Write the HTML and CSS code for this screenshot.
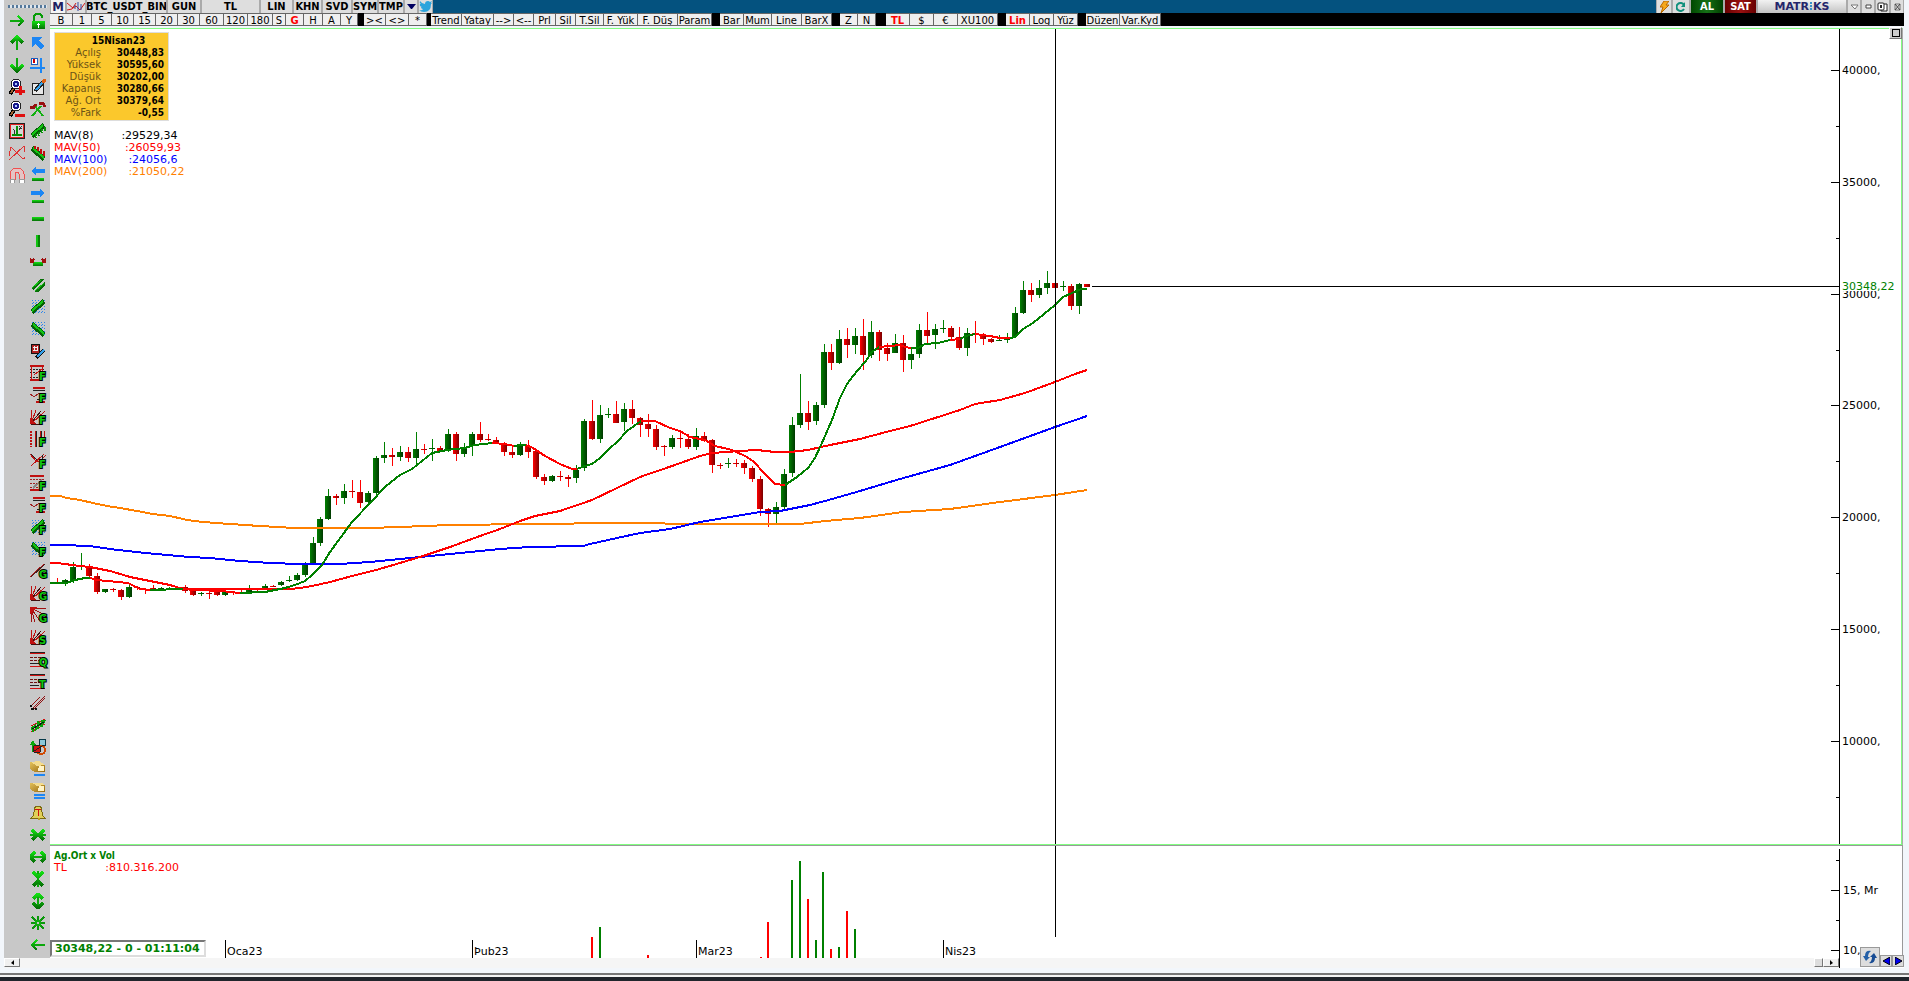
FILE: index.html
```html
<!DOCTYPE html>
<html lang="tr">
<head>
  <meta charset="UTF-8" />
  <meta name="viewport" content="width=device-width, initial-scale=1.0"/>
  <title>BTC_USDT_BIN | Matriks</title>
  <link rel="stylesheet" href="styles.css">
</head>
<body>

  <!-- Icon library -->
  <svg class="icon-defs" aria-hidden="true">
    <defs>
      <linearGradient id="green-v" x1="0" y1="0" x2="0" y2="1">
        <stop offset="0" stop-color="#12e012"/><stop offset="1" stop-color="#067006"/>
      </linearGradient>
      <linearGradient id="gold" x1="0" y1="0" x2="1" y2="1">
        <stop offset="0" stop-color="#e8c860"/><stop offset="1" stop-color="#98680c"/>
      </linearGradient>
      <pattern id="dots" width="3" height="3" patternUnits="userSpaceOnUse">
        <rect width="1" height="1" fill="#2a86ee"/><rect x="2" y="1" width="1" height="1" fill="#2a86ee"/>
      </pattern>
      <linearGradient id="candle-up"><stop offset="0" stop-color="#008000"/><stop offset="1" stop-color="#003800"/></linearGradient>
      <linearGradient id="candle-down"><stop offset="0" stop-color="#ff0000"/><stop offset="1" stop-color="#780000"/></linearGradient>
    </defs>

    <symbol id="i-right" viewBox="0 0 16 16"><path d="M9 3l5 5-5 5" fill="none" stroke="url(#green-v)" stroke-width="2"/><path d="M1 7h12v2H1z" fill="#0ba80b"/></symbol>
    <symbol id="i-left" viewBox="0 0 16 16"><path d="M7 3L2 8l5 5" fill="none" stroke="url(#green-v)" stroke-width="2"/><path d="M2 7h13v2H2z" fill="#0ba80b"/></symbol>
    <symbol id="i-up" viewBox="0 0 16 16"><path d="M7 3h2v12H7z" fill="#0ba80b"/><path d="M2 8l6-6 6 6" fill="none" stroke="url(#green-v)" stroke-width="3"/></symbol>
    <symbol id="i-down" viewBox="0 0 16 16"><path d="M7 1h2v12H7z" fill="#0ba80b"/><path d="M2 8l6 6 6-6" fill="none" stroke="url(#green-v)" stroke-width="3"/></symbol>
    <symbol id="i-magnifier" viewBox="0 0 16 16"><path d="M5 9l-4 6" stroke="#000" stroke-width="4"/><path d="M4 10l-2 4" stroke="#a06030" stroke-width="2"/><circle cx="7" cy="5" r="5" fill="#fff" stroke="#222" stroke-width="1"/><circle cx="7" cy="5" r="2" fill="#aac4ff" stroke="#18188c" stroke-width="2"/></symbol>
    <symbol id="i-zoomin" viewBox="0 0 16 16"><use href="#i-magnifier"/><path d="M6 12h10M11 7v9" stroke="#e01010" stroke-width="3"/></symbol>
    <symbol id="i-zoomout" viewBox="0 0 16 16"><use href="#i-magnifier"/><path d="M6 14h10" stroke="#e01010" stroke-width="3"/></symbol>
    <symbol id="i-scale" viewBox="0 0 16 16"><path d="M0 0h16v16H0z" fill="#222"/><path d="M1 1h14v14H1z" fill="#e02020"/><path d="M2 2h12v12H2z" fill="#d8d8d8"/><path d="M8 3v9M3 12h10" stroke="#069006" stroke-width="2"/><path d="M4 6l2 2-1 3M10 3l3 3M13 3l-3 4" stroke="#333" fill="none"/></symbol>
    <symbol id="i-butterfly" viewBox="0 0 16 16"><path d="M-1 15L2 2l12 12 3-2L15 1 0 15z" fill="none" stroke="#e03030"/></symbol>
    <symbol id="i-magnet" viewBox="0 0 16 16"><path d="M1 12V7a7 6 0 0 1 14 0v5h-5V7a2 2 0 0 0-4 0v5z" fill="#e4c4c4" stroke="#f05050"/><path d="M1 12h4v4H1zM10 12h5v4h-5z" fill="#fff" stroke="#999" stroke-width="1"/></symbol>

    <symbol id="i-lock" viewBox="0 0 16 16"><path d="M4 8V4q0-3 4-3t4 3v1" fill="none" stroke="#079c07" stroke-width="2"/><rect x="2" y="8" width="13" height="8" rx="1" fill="url(#green-v)"/><path d="M8 10v5M7 11h3" stroke="#fff"/></symbol>
    <symbol id="i-cursor" viewBox="0 0 16 16"><path d="M2 2h10L9 5l5 6-3 3-6-5-3 3z" fill="#1c86f4"/></symbol>
    <symbol id="i-crossbox" viewBox="0 0 16 16"><path d="M11 1v15M0 11h15" stroke="#1c86f4" stroke-width="2"/><rect x="1" y="1" width="6" height="6" fill="#fff" stroke="#1c60c0"/><path d="M4 2v4" stroke="#c00" stroke-width="2"/></symbol>
    <symbol id="i-note" viewBox="0 0 16 16"><path d="M2 4h11v11H2z" fill="#e8e8e8" stroke="#222"/><path d="M5 12L14 2" stroke="#222" stroke-width="4"/><path d="M6 11l7-8" stroke="#35a0ea" stroke-width="2"/><circle cx="14" cy="2" r="2" fill="#e06010"/></symbol>
    <symbol id="i-tools" viewBox="0 0 16 16"><path d="M2 15L11 5M13 15L5 5" stroke="#10b010" stroke-width="2"/><path d="M0 6h4l2-3M9 2h4l2 4" fill="none" stroke="#981010" stroke-width="3"/></symbol>
    <symbol id="i-bar-up" viewBox="0 0 16 16"><path d="M2 13L14 2" stroke="#066006" stroke-width="5"/><path d="M2 12L13 2" stroke="#12c412" stroke-width="2"/></symbol>
    <symbol id="i-bar-down" viewBox="0 0 16 16"><path d="M2 3l12 11" stroke="#066006" stroke-width="5"/><path d="M3 3l11 10" stroke="#12c412" stroke-width="2"/></symbol>
    <symbol id="i-support" viewBox="0 0 16 16"><use href="#i-bar-up"/><path d="M6 15v-4M9 13V9M12 10V6M15 8V4" stroke="#0a900a" stroke-width="2"/><path d="M6 13h1M9 11h1M12 8h1" stroke="#d8ffd8"/></symbol>
    <symbol id="i-resist" viewBox="0 0 16 16"><use href="#i-bar-down"/><path d="M5 4V1M8 6V2M11 9V4M14 11V6" stroke="#c01010" stroke-width="2"/></symbol>
    <symbol id="i-hleft" viewBox="0 0 16 16"><path d="M1 4l5-4v2h9v4H6v2z" fill="#1c86f4"/><path d="M2 11h12v3H2z" fill="url(#green-v)"/></symbol>
    <symbol id="i-hright" viewBox="0 0 16 16"><path d="M15 4l-5-4v2H1v4h9v2z" fill="#1c86f4"/><path d="M2 11h12v3H2z" fill="url(#green-v)"/></symbol>
    <symbol id="i-hbar" viewBox="0 0 16 16"><path d="M2 6h12v4H2z" fill="url(#green-v)"/></symbol>
    <symbol id="i-vbar" viewBox="0 0 16 16"><path d="M6 2h4v12H6z" fill="#078007"/><path d="M6 2h2v12H6z" fill="#12c412"/></symbol>
    <symbol id="i-segment" viewBox="0 0 16 16"><path d="M3 7h10v4H3z" fill="url(#green-v)"/><path d="M0 4l4 4M4 4L0 8M12 4l4 4M16 4l-4 4" stroke="#a01010" stroke-width="2"/></symbol>
    <symbol id="i-channel" viewBox="0 0 16 16"><path d="M1 11L10 2h4L3 13zM4 15L15 4v4l-7 7z" fill="#067006"/><path d="M2 11l9-8M5 14l9-8" stroke="#14c414"/></symbol>
    <symbol id="i-dots-up" viewBox="0 0 16 16"><rect x="1" y="1" width="14" height="14" fill="url(#dots)"/><use href="#i-bar-up"/></symbol>
    <symbol id="i-dots-down" viewBox="0 0 16 16"><rect x="1" y="1" width="14" height="14" fill="url(#dots)"/><use href="#i-bar-down"/></symbol>
    <symbol id="i-calc" viewBox="0 0 16 16"><path d="M1 1h8v9H1z" fill="#b02020" stroke="#111"/><path d="M3 4h5M3 7h5M4 3v5M7 3v5" stroke="#eee"/><path d="M6 15l8-8" stroke="#111" stroke-width="4"/><path d="M7 14l7-7" stroke="#35a0ea" stroke-width="2"/></symbol>
    <symbol id="i-grid" viewBox="0 0 16 16"><path d="M0 1h14M0 15h11" stroke="#c01010" stroke-width="2"/><path d="M0 4h14M0 7h12M0 12h9" stroke="#222" stroke-dasharray="2 1"/><path d="M1 2v12M4 10l9-7M12 2v5" stroke="#c01010"/></symbol>
    <symbol id="i-grid-gray" viewBox="0 0 16 16"><path d="M0 1h14M0 15h11" stroke="#c01010" stroke-width="2"/><path d="M0 4h14M0 8h12M0 12h9" stroke="#a02020" stroke-dasharray="2 1"/><path d="M3 13l9-8" stroke="#888" stroke-width="2"/></symbol>
    <symbol id="i-steps" viewBox="0 0 16 16"><path d="M3 1h12M6 15h9" stroke="#c01010" stroke-width="2"/><path d="M3 3h12M7 12h4" stroke="#222"/><path d="M-1 6l5 4 5-4h6" fill="none" stroke="#a02020"/></symbol>
    <symbol id="i-fan" viewBox="0 0 16 16"><path d="M1 1v14M1 15L6 1M1 15L15 2" stroke="#c01010"/><path d="M1 14L11 2M1 15h9" stroke="#401010"/><path d="M0 9l6 6H0z" fill="#c01010"/></symbol>
    <symbol id="i-fan-down" viewBox="0 0 16 16"><path d="M1 1h15M1 1v14M1 1l4 14M1 1l9 13M1 1l14 7" stroke="#a01010"/><path d="M0 0h7L0 7z" fill="#c01010"/></symbol>
    <symbol id="i-vlines" viewBox="0 0 16 16"><path d="M1 0v16" stroke="#c01010" stroke-width="2" stroke-dasharray="2 1"/><path d="M5 0v16M10 0v16M14 0v7" stroke="#c01010"/><path d="M6 0v16M11 0v16" stroke="#222"/></symbol>
    <symbol id="i-fork" viewBox="0 0 16 16"><path d="M0 1l6 7h5M1 13L14 1M10 8l6-6" fill="none" stroke="#c01010"/><path d="M1 1l6 6M12 8V2" fill="none" stroke="#222"/></symbol>
    <symbol id="i-line" viewBox="0 0 16 16"><path d="M0 14L14 1" stroke="#b01010"/><path d="M1 14L15 1" stroke="#402020"/></symbol>
    <symbol id="i-levels" viewBox="0 0 16 16"><path d="M0 1h15M0 12h9" stroke="#222"/><path d="M0 2h15M0 15h15" stroke="#d01010"/><path d="M0 6h15M0 9h10" stroke="#701010" stroke-dasharray="3 1"/></symbol>
    <symbol id="i-parallel" viewBox="0 0 16 16"><path d="M1 11l9-9M4 14L15 3M2 14l13-13" stroke="#901010"/><path d="M0 11h2M1 14h3M5 14h2" stroke="#111" stroke-width="2"/></symbol>
    <symbol id="i-regress" viewBox="0 0 16 16"><path d="M1 9l14-7M1 15l14-8" stroke="#d01010"/><path d="M1 12l4-3 1 3 3-6 2 3 4-6M3 15V9M8 12V4M12 10V3" fill="none" stroke="#08a008" stroke-width="2"/><path d="M2 12l12-7" stroke="#111"/></symbol>
    <symbol id="i-shapes" viewBox="0 0 16 16"><path d="M9 0h6v6H9z" fill="#8cc8d8" stroke="#063848"/><path d="M0 6l3-5 3 5H4v7H2V6z" fill="#0ca80c"/><circle cx="11" cy="11" r="4" fill="none" stroke="#d04800" stroke-width="2"/><circle cx="7" cy="10" r="4" fill="#d01010" stroke="#222"/><path d="M4 12l10-6" stroke="#222"/></symbol>
    <symbol id="i-gold" viewBox="0 0 16 16"><path d="M0 1l9-1 6 4v7H5L0 8z" fill="url(#gold)"/><path d="M1 1l8-1 6 4-8 1z" fill="#f4dc8c"/><path d="M9 5h5v5H8z" fill="#fff4c8"/></symbol>
    <symbol id="i-gold1" viewBox="0 0 16 16"><use href="#i-gold"/><path d="M4 14h11" stroke="#1c86f4" stroke-width="2"/></symbol>
    <symbol id="i-gold2" viewBox="0 0 16 16"><use href="#i-gold" y="-2"/><path d="M4 12h11M4 15h11" stroke="#1c86f4" stroke-width="2"/></symbol>
    <symbol id="i-bell" viewBox="0 0 16 16"><path d="M8 1q4 0 4 6 0 4 3 6H1q3-2 3-6 0-6 4-6z" fill="#e0cf58" stroke="#7a6a10"/><circle cx="9" cy="14" r="1" fill="#c0a020"/><path d="M5 4h6M8 4v7" stroke="#d01010" stroke-width="1"/></symbol>
    <symbol id="i-squeeze" viewBox="0 0 16 16"><path d="M0 8h6M10 8h6" stroke="#0ba80b" stroke-width="2"/><path d="M2 3l5 5-5 5M14 3L9 8l5 5" fill="none" stroke="url(#green-v)" stroke-width="3"/></symbol>
    <symbol id="i-widen" viewBox="0 0 16 16"><path d="M1 8h14" stroke="#0ba80b" stroke-width="2"/><path d="M5 3L0 8l5 5M11 3l5 5-5 5" fill="none" stroke="url(#green-v)" stroke-width="3"/></symbol>
    <symbol id="i-vsqueeze" viewBox="0 0 16 16"><path d="M8 0v16" stroke="#0ba80b" stroke-width="2"/><path d="M3 1l5 5 5-5M3 15l5-5 5 5" fill="none" stroke="url(#green-v)" stroke-width="3"/></symbol>
    <symbol id="i-vwiden" viewBox="0 0 16 16"><path d="M8 1v14" stroke="#0ba80b" stroke-width="2"/><path d="M3 6l5-5 5 5M3 10l5 5 5-5" fill="none" stroke="url(#green-v)" stroke-width="3"/></symbol>
    <symbol id="i-fit" viewBox="0 0 16 16"><path d="M1 8h14M8 1v14M2 2l12 12M14 2L2 14" stroke="#0a980a" stroke-width="2"/><path d="M5 5h6v6H5z" fill="#0fae0f"/><path d="M7 7h2v2H7z" fill="#c8c8c8"/></symbol>
  </svg>

  <div class="app">
    <div class="workspace">

      <aside class="tools">
        <div class="grip"></div>
        <div class="tool-columns">
          <div class="tool-column" data-icons="right up down zoomin zoomout scale butterfly magnet"></div>
          <div class="tool-column" data-icons="lock cursor crossbox note tools support resist hleft hright hbar vbar segment channel dots-up dots-down calc grid:F steps:F fan:F vlines:F fork:F grid-gray:F steps:F dots-up:F dots-down:F line:G fan:G fan-down:G fan:S levels:Q levels:T parallel regress shapes gold1 gold2 bell squeeze widen vsqueeze vwiden fit left"></div>
        </div>
      </aside>

      <main>
        <header class="titlebar">
          <div class="title-left">
            <button class="logo" aria-label="Matriks menu">M</button>
            <button aria-label="Grafik"><svg width="18" height="11" viewBox="0 0 18 11"><path d="M0 2l6 5 3-2 4 4 5-7M0 9l5-1 4-6" fill="none" stroke="#d01818"/><path d="M8 4v4M11 1v9M14 3v6" stroke="#3048a0"/></svg></button>
            <button>BTC_USDT_BIN</button>
            <button>GUN</button>
            <button>TL</button>
            <button>LIN</button>
            <button>KHN</button>
            <button>SVD</button>
            <button>SYM</button>
            <button>TMP</button>
            <button aria-label="Liste"><svg width="9" height="5" viewBox="0 0 9 5"><path d="M0 0h9L5 5H4z" fill="#000060"/></svg></button>
            <button aria-label="Twitter"><svg width="13" height="11" viewBox="0 0 13 11"><path d="M0 9q3 1 4-1-2 0-2-2h1Q0 5 1 3h1Q0 2 1 0q2 3 5 3 0-3 3-3 1 0 2 1l2-1-1 2 1 0-1 1q0 8-7 8-3 0-5-2z" fill="#2ca4dc"/></svg></button>
          </div>
          <div class="title-right">
            <button aria-label="Hızlı emir"><svg width="9" height="12" viewBox="0 0 9 12"><path d="M4 0h5L6 4h3L1 12l2-6H0z" fill="#f6a81c" stroke="#b86800" stroke-width="1"/></svg></button>
            <button aria-label="Yenile"><svg width="10" height="10" viewBox="0 0 10 10"><path d="M8 3a4 4 0 1 0 0 4" fill="none" stroke="#12907c" stroke-width="2"/><path d="M9 0v5H5z" fill="#12907c"/></svg></button>
            <button class="buy">AL</button>
            <button class="sell">SAT</button>
            <button class="brand">MATR<i></i>KS</button>
            <button aria-label="Küçült"><svg width="9" height="6" viewBox="0 0 9 6"><path d="M1 1h7L5 5z" fill="#fff" stroke="#777"/></svg></button>
            <button aria-label="Simge"><svg width="7" height="5" viewBox="0 0 7 5"><path d="M1 1h5v3H1z" fill="#fff" stroke="#444"/></svg></button>
            <button aria-label="Pencere"><svg width="11" height="10" viewBox="0 0 11 10"><path d="M4 2h6v7H4z" fill="#fff" stroke="#222"/><rect x="1" y="1" width="6" height="7" rx="1" fill="#fff" stroke="#222"/><path d="M3 3h2v3H3z" fill="#222"/></svg></button>
            <button aria-label="Kapat"><svg width="7" height="8" viewBox="0 0 7 8"><path d="M1 1h5v6H1z" fill="none" stroke="#777"/><path d="M1 1l5 6M6 1L1 7" stroke="#444"/></svg></button>
          </div>
        </header>

        <nav class="commands">
          <button>B</button><button>1</button><button>5</button><button>10</button><button>15</button><button>20</button><button>30</button><button>60</button><button>120</button><button>180</button><button>S</button><button class="active">G</button><button>H</button><button>A</button><button>Y</button>
          <span></span>
          <button>&gt;&lt;</button><button>&lt;&gt;</button><button>*</button>
          <span></span>
          <button>Trend</button><button>Yatay</button><button>--&gt;</button><button>&lt;--</button><button>Prl</button><button>Sil</button><button>T.Sil</button><button>F. Yük</button><button>F. Düş</button><button>Param</button>
          <span></span>
          <button>Bar</button><button>Mum</button><button>Line</button><button>BarX</button>
          <span></span>
          <button>Z</button><button>N</button>
          <span></span>
          <button class="active">TL</button><button>$</button><button>€</button><button>XU100</button>
          <span></span>
          <button class="active">Lin</button><button>Log</button><button>Yüz</button>
          <span></span>
          <button>Düzen</button><button>Var.Kyd</button>
        </nav>

        <section class="pane price-pane">
          <svg class="plot" id="price-plot"></svg>
          <svg class="axis" id="price-axis"></svg>

          <table class="quote">
            <caption>15Nisan23</caption>
            <tbody>
              <tr><th>Açılış</th><td>30448,83</td></tr>
              <tr><th>Yüksek</th><td>30595,60</td></tr>
              <tr><th>Düşük</th><td>30202,00</td></tr>
              <tr><th>Kapanış</th><td>30280,66</td></tr>
              <tr><th>Ağ. Ort</th><td>30379,64</td></tr>
              <tr><th>%Fark</th><td>-0,55</td></tr>
            </tbody>
          </table>

          <div class="legend">
            <p>MAV(8)        :29529,34</p>
            <p class="red">MAV(50)       :26059,93</p>
            <p class="blue">MAV(100)      :24056,6</p>
            <p class="orange">MAV(200)      :21050,22</p>
          </div>

          <button class="maximize" aria-label="Büyüt"></button>
        </section>

        <section class="pane volume-pane">
          <svg class="plot" id="volume-plot"></svg>
          <svg class="axis" id="volume-axis"></svg>
          <div class="volume-legend">
            <p class="green">Ag.Ort x Vol</p>
            <p class="red">TL           :810.316.200</p>
          </div>
          <output class="countdown">30348,22 - 0 - 01:11:04</output>
        </section>
      </main>
    </div>

    <div class="hscroll">
      <button aria-label="Sola kaydır"><svg width="3" height="5" viewBox="0 0 3 5"><path d="M3 0v5L0 3z"/></svg></button>
      <div class="track"></div>
      <div class="thumb"></div>
      <button aria-label="Sağa kaydır"><svg width="3" height="5" viewBox="0 0 3 5"><path d="M0 0v5l3-2z"/></svg></button>
      <div class="corner"></div>
    </div>

    <div class="pager">
      <button class="sync" aria-label="Güncelle"><svg width="14" height="14" viewBox="0 0 14 14"><path d="M8 1Q2 0 2 6H0l3 5 4-4H5Q5 3 8 1z" fill="#2460a8"/><path d="M6 13q6 1 6-5h2l-3-5-4 4h2q0 4-3 6z" fill="#184c94"/></svg></button>
      <button aria-label="Önceki"><svg width="7" height="8" viewBox="0 0 7 8"><path d="M7 0v8L0 4z" fill="#0000f0" stroke="#000"/></svg></button>
      <button aria-label="Sonraki"><svg width="7" height="8" viewBox="0 0 7 8"><path d="M0 0v8l7-4z" fill="#0000f0" stroke="#000"/></svg></button>
    </div>
  </div>
  <div class="frame-line"></div>
  <div class="taskbar"></div>

  <script src="chart.js"></script>
</body>
</html>
```

FILE: styles.css
```css
:root {
  --frame: #f2f6fb;
  --tools: #c8c8c8;
  --button: #efefef;
  --edge: #666;
  --title: #04527f;
  --pane-line: #80ff80;
  --up: #008000;
  --down: #ff0000;
}

* {
  margin: 0;
  padding: 0;
  box-sizing: border-box;
}

body {
  display: flex;
  flex-direction: column;
  min-height: 100vh;
  background-color: var(--frame);
  font-family: "DejaVu Sans", Verdana, sans-serif;
  font-size: 11px;
  line-height: 12px;
  color: #000;
}

button {
  font: inherit;
  color: inherit;
  border: none;
  background: none;
}

.icon-defs {
  position: absolute;
  width: 0;
  height: 0;
}

.app {
  position: relative;
  flex: 1;
  display: flex;
  flex-direction: column;
  margin: 0 5px 5px 4px;
}

.workspace {
  flex: 1;
  display: flex;
}

main {
  flex: 1;
  min-width: 0;
  display: flex;
  flex-direction: column;
}

/* Left tool palette */
.tools {
  width: 46px;
  background-color: var(--tools);
  padding: 5px 2px 0 2px;
}

.grip {
  height: 3px;
  margin: 0 1px 2px 2px;
  background: repeating-linear-gradient(90deg, #55789a 0 2px, #dfe6ee 2px 4px);
}

.tool-columns {
  display: flex;
}

.tool-column {
  width: 21px;
}

.tool-column button {
  display: flex;
  align-items: center;
  justify-content: center;
  width: 21px;
  height: 22px;
}

.tool-column svg {
  width: 16px;
  height: 16px;
  overflow: visible;
  shape-rendering: crispEdges;
}

.tool-column text {
  font-size: 10px;
  font-weight: bold;
  fill: #10c810;
  stroke: #000;
  stroke-width: 2px;
  paint-order: stroke;
}

/* Title bar */
.titlebar {
  display: flex;
  justify-content: space-between;
  height: 13px;
  background-color: var(--title);
  font-family: "DejaVu Sans Condensed", "DejaVu Sans", sans-serif;
  font-weight: bold;
}

.title-left {
  display: grid;
  grid-template-columns: 16px 20px 81px 34px 59px 33px 29px 30px 26px 26px 14px 15px;
}

.title-right {
  display: grid;
  grid-template-columns: 16px 18px 34px 33px 90px 14px 14px 15px 14px;
}

.titlebar button {
  display: flex;
  align-items: center;
  justify-content: center;
  overflow: hidden;
  white-space: nowrap;
  height: 13px;
  background-color: #dedede;
  border: 1px solid #aaa;
  border-width: 0 1px;
}

.titlebar .logo {
  color: #202060;
  font-size: 13px;
  background-color: #f4f4f4;
}

.titlebar .buy {
  color: #fff;
  background-image: linear-gradient(90deg, #004800, #167016, #004000);
}

.titlebar .sell {
  color: #fff;
  background-image: linear-gradient(90deg, #680000, #981010, #680000);
}

.titlebar .brand {
  color: #25256b;
  font-family: "DejaVu Sans", sans-serif;
  background-image: linear-gradient(#f2f2f2, #c4c4c4);
}

.brand i {
  width: 2px;
  height: 9px;
  margin: 0 1px;
  background: repeating-linear-gradient(#3a90c8 0 2px, transparent 2px 3px);
}

/* Command row */
.commands {
  display: grid;
  grid-template-columns:
    23px 19px 20px 22px 22px 22px 22px 24px 24px 25px 13px 18px 19px 18px 17px 6px
    22px 23px 18px 4px
    31px 32px 20px 20px 22px 20px 28px 34px 40px 34px 8px
    24px 28px 30px 30px 8px
    18px 18px 10px
    24px 24px 24px 40px 8px
    24px 24px 24px 8px
    34px 41px;
  height: 13px;
  background-color: #000;
  font-size: 10px;
}

.commands button {
  height: 13px;
  line-height: 13px;
  overflow: hidden;
  white-space: nowrap;
  background-color: var(--button);
  border: solid var(--edge);
  border-width: 1px 1px 1px 0;
}

.commands .active {
  color: var(--down);
  font-weight: bold;
}

/* Chart panes */
.pane {
  position: relative;
  display: flex;
  margin-right: 1px;
  background-color: #fff;
}

.price-pane {
  flex: 1;
  border-top: 1px solid var(--pane-line);
  border-bottom: 1px solid var(--pane-line);
  border-right: 1px solid #aaa;
  box-shadow: inset -1px 0 var(--pane-line);
  margin-top: 2px;
}

.volume-pane {
  height: 113px;
  border-top: 1px solid #999;
  border-right: 1px solid #999;
}

.plot {
  flex: 1;
  min-width: 0;
  height: 100%;
  shape-rendering: crispEdges;
}

.price-pane .plot {
  position: relative;
  z-index: 1;
}

.volume-pane .plot {
  overflow: hidden;
}

.axis {
  width: 63px;
  height: 100%;
  overflow: visible;
  shape-rendering: crispEdges;
}

.axis text,
.plot text {
  font-size: 11px;
}

.last-price {
  fill: var(--up);
}

.ma {
  fill: none;
  stroke-width: 2px;
}

.quote {
  position: absolute;
  z-index: 2;
  top: 3px;
  left: 4px;
  width: 115px;
  padding: 14px 4px 1px 0;
  background-color: #fbc82c;
  border: 1px solid #ddd;
  border-spacing: 0;
  font-size: 10px;
}

.quote caption {
  position: absolute;
  top: 2px;
  left: 0;
  width: 100%;
  padding-left: 14px;
  font-family: "DejaVu Sans Condensed", "DejaVu Sans", sans-serif;
  font-weight: bold;
}

.quote th {
  width: 46px;
  font-weight: normal;
  text-align: right;
  color: #6b5316;
}

.quote td {
  font-family: "DejaVu Sans Condensed", "DejaVu Sans", sans-serif;
  font-weight: bold;
  text-align: right;
}

.legend,
.volume-legend {
  position: absolute;
  z-index: 2;
  left: 4px;
}

.legend p,
.volume-legend p {
  white-space: pre;
}

.legend {
  top: 101px;
}

.volume-legend {
  top: 4px;
}

.green {
  color: var(--up);
  font-family: "DejaVu Sans Condensed", "DejaVu Sans", sans-serif;
  font-size: 10px;
  font-weight: bold;
}

.red {
  color: var(--down);
}

.blue {
  color: #0000ff;
}

.orange {
  color: #ff8000;
}

.maximize {
  position: absolute;
  z-index: 2;
  top: -2px;
  right: 0;
  width: 13px;
  height: 12px;
  background-color: #ccc;
  border: 1px solid #fff;
  border-right-color: #777;
  border-bottom-color: #777;
}

.maximize::before {
  content: "";
  display: block;
  width: 6px;
  height: 6px;
  margin: 0 auto;
  border: 1px solid #000;
}

.countdown {
  position: absolute;
  left: 0;
  bottom: 1px;
  padding: 1px 4px 0 3px;
  border: 2px solid #777;
  border-right-color: #ddd;
  border-bottom-color: #ddd;
  background-color: #fff;
  color: var(--up);
  font-weight: bold;
}

/* Horizontal scroll bar */
.hscroll {
  display: flex;
  height: 10px;
  background-color: #f5f5f5;
}

.hscroll button,
.thumb {
  width: 16px;
  height: 9px;
  display: flex;
  align-items: center;
  justify-content: center;
  background-color: #f0f0f0;
  border: 1px solid #fff;
  border-right-color: #777;
  border-bottom-color: #777;
}

.hscroll .thumb {
  width: 9px;
  background-color: #ddd;
}

.track {
  flex: 1;
}

.corner {
  width: 65px;
  border-left: 1px solid #000;
  background-color: #fff;
}

.pager {
  position: absolute;
  right: 0;
  bottom: 1px;
  display: flex;
  align-items: flex-end;
}

.pager button {
  display: flex;
  align-items: center;
  justify-content: center;
  width: 12px;
  height: 12px;
  background-color: #ddd;
  border: 1px solid #999;
}

.pager .sync {
  width: 20px;
  height: 20px;
}

.frame-line {
  height: 2px;
  background-color: #777;
}

.taskbar {
  height: 6px;
  border-top: 2px solid #f4f4f4;
  background-color: #20242b;
}
```

FILE: chart.js
```js
const NS = 'http://www.w3.org/2000/svg';
const GREEN = '#008000';
const RED = '#ff0000';

function add(parent, tag, attrs, text) {
  const node = document.createElementNS(NS, tag);
  for (const key in attrs) node.setAttribute(key, attrs[key]);
  if (text) node.textContent = text;
  parent.appendChild(node);
  return node;
}

// Tool palette, "icon" or "icon:letter"
document.querySelectorAll('.tool-column').forEach(column => {
  column.dataset.icons.split(' ').forEach(item => {
    const [icon, letter] = item.split(':');
    const button = document.createElement('button');
    button.setAttribute('aria-label', icon);
    const svg = add(button, 'svg', { viewBox: '0 0 16 16' });
    add(svg, 'use', { href: '#i-' + icon });
    if (letter) add(svg, 'text', { x: 9, y: 15 }, letter);
    column.appendChild(button);
  });
});

// Candles: high, body top, body bottom, low, 1 = up
const candles = [
  [578,582,583,583,0],[579,580,583,586,1],[562,567,581,583,1],[553,566,567,570,1],[564,566,576,578,0],
  [573,576,592,594,0],[589,589,592,593,1],[588,589,590,592,0],[589,590,597,600,0],[584,587,597,598,1],
  [586,587,588,590,0],[588,589,590,594,0],[585,588,589,590,0],[587,588,589,590,1],[587,588,589,590,1],
  [587,588,589,590,0],[585,587,591,593,0],[590,591,595,596,0],[592,593,594,596,1],[589,593,594,599,0],
  [592,592,595,596,0],[591,592,595,596,1],[591,592,593,595,0],[590,592,593,593,0],[585,589,593,593,1],
  [588,589,590,591,0],[584,586,588,589,1],[585,586,587,587,0],[581,582,585,586,1],[576,580,581,582,1],
  [573,575,580,581,1],[562,563,575,577,1],[537,543,563,564,1],[517,519,543,546,1],[489,496,519,520,1],
  [494,496,498,505,0],[484,491,498,504,1],[480,491,492,498,0],[480,492,503,508,0],[491,493,502,505,1],
  [456,458,493,498,1],[442,455,458,463,1],[448,455,457,466,0],[446,452,457,461,1],[447,452,458,462,0],
  [432,449,458,465,1],[444,449,450,454,0],[439,448,449,461,1],[446,448,451,452,0],[429,434,451,452,1],
  [432,434,454,461,0],[443,448,454,457,1],[432,434,446,456,1],[422,434,440,442,0],[434,439,440,441,0],
  [437,440,443,444,0],[442,443,452,456,0],[446,452,455,458,0],[442,445,455,456,1],[440,446,452,458,0],
  [450,451,477,479,0],[474,477,481,485,0],[475,476,481,482,1],[471,476,477,481,0],[475,477,479,487,0],
  [465,470,478,483,1],[419,421,468,471,1],[400,421,439,440,0],[405,415,439,443,1],[408,414,415,418,1],
  [401,414,423,423,0],[403,409,422,431,1],[400,409,418,424,0],[417,418,425,437,0],[414,424,429,437,0],
  [425,429,447,450,0],[445,446,447,456,0],[435,438,447,449,1],[431,438,439,448,0],[434,439,447,449,0],
  [428,436,447,450,1],[432,436,441,442,0],[439,440,465,473,0],[463,465,466,469,0],[458,463,464,468,1],
  [459,463,464,467,0],[460,463,468,474,0],[466,468,479,482,0],[476,479,509,516,0],[508,509,514,527,0],
  [502,507,514,523,1],[469,474,507,511,1],[417,425,473,477,1],[374,413,425,428,1],[401,413,422,430,0],
  [402,405,421,425,1],[344,352,405,408,1],[344,352,363,370,0],[330,339,363,364,1],[328,339,345,358,0],
  [328,336,345,354,1],[319,336,355,370,0],[321,332,355,358,1],[330,332,350,361,0],[343,348,354,361,0],
  [334,343,353,353,1],[335,343,360,372,0],[348,354,360,369,1],[324,330,354,358,1],[312,330,336,344,0],
  [324,329,335,349,1],[320,328,329,333,1],[326,328,337,341,0],[327,337,348,350,0],[328,333,348,356,1],
  [321,333,335,343,0],[333,335,339,345,0],[338,339,342,343,0],[335,340,341,341,1],[333,338,340,343,1],
  [307,313,336,338,1],[281,290,313,314,1],[283,290,295,302,0],[280,288,295,298,1],[271,283,288,294,1],
  [280,283,288,289,0],[281,286,287,291,1],[284,286,306,310,0],[283,284,306,314,1],[284,284,287,287,0]
];

const averages = [
  ['#ff8000', '50,496 60,496 67,498 80,500 93,503 107,506 120,508 137,511 153,514 170,516 187,520 203,522 230,524 260,526 295,528 368,528 400,527 450,525 616,523 712,524 800,524 825,521 860,518 903,512 950,509 1000,502 1055,495 1087,490'],
  ['#0000ff', '50,545 62,545 90,546 110,549 145,553 190,557 210,558 240,561 270,563 300,564 340,564 370,562 400,559 430,556 460,553 500,549 530,547 583,546 590,544 608,540 640,533 670,529 700,522 730,517 760,512 780,511 810,505 825,501 860,491 900,479 950,465 1000,447 1055,427 1087,416'],
  [RED, '50,563 57,563 80,566 90,567 110,571 130,577 150,581 170,585 183,589 290,589 300,588 312,586 330,582 352,576 376,570 400,563 420,557 450,547 480,536 500,529 520,521 535,516 560,511 592,500 640,477 672,466 700,456 712,453 740,451 757,450 775,452 790,452 808,450 830,445 860,439 886,432 910,426 960,410 975,404 1000,400 1025,393 1055,382 1075,374 1087,370'],
  [GREEN, '50,583 67,583 75,580 85,578 90,578'],
  [RED, '90,578 97,580 128,583 140,589 150,590'],
  [GREEN, '150,590 183,589'],
  [RED, '183,589 195,590 222,591 230,592 240,593'],
  [GREEN, '240,593 265,592 285,588 295,585 305,581 312,575 322,565 330,552 352,522 372,501 385,487 400,475 412,469 432,453 447,450 465,448 475,445 492,443'],
  [RED, '492,443 505,444 514,446'],
  [GREEN, '514,446 520,445 526,445'],
  [RED, '526,445 533,448 545,456 560,464 572,469 577,469'],
  [GREEN, '577,469 582,467 592,464 600,458 610,448 617,442 627,431 641,421'],
  [RED, '641,421 655,421 670,428 680,431 690,437 705,440 715,446 732,450 745,456 753,461 765,474 775,484 785,485'],
  [GREEN, '785,485 797,477 808,468 815,458 821,445 832,420 840,398 847,384 857,371 865,362 872,352 879,347'],
  [RED, '879,347 900,345 905,347 911,348'],
  [GREEN, '911,348 918,348 925,344 938,343 950,340'],
  [RED, '950,340 960,339'],
  [GREEN, '960,339 966,336 975,334'],
  [RED, '975,334 990,336 1000,338 1010,338'],
  [GREEN, '1010,338 1015,337 1023,329 1033,323 1055,305 1063,297 1072,293 1081,289 1087,289']
];

const FIRST_X = 57;
const LAST_X = 1087;
const CROSS_X = 1055;

// Price plot
const price = document.getElementById('price-plot');
const layer = add(price, 'g', { transform: 'translate(-50 -29)' });
const step = (LAST_X - FIRST_X) / (candles.length - 1);

candles.forEach(([high, top, bottom, low, up], i) => {
  const x = Math.round(FIRST_X + i * step);
  add(layer, 'rect', { x: x, y: high, width: 1, height: Math.max(low - high, 1), fill: up ? GREEN : RED });
  add(layer, 'rect', {
    x: x - 3, y: top, width: 6, height: Math.max(bottom - top, 1),
    fill: up ? 'url(#candle-up)' : 'url(#candle-down)'
  });
});
averages.forEach(([color, points]) => add(layer, 'polyline', { class: 'ma', stroke: color, points: points }));
add(price, 'rect', { x: CROSS_X - 50, y: 0, width: 1, height: '100%' });
add(price, 'rect', { x: 1042, y: 257, width: '100%', height: 1 });

function tick(axis, y, size) {
  add(axis, 'rect', { x: -size, y: y, width: size, height: 1 });
}

// Price axis, 5000 per major tick
const priceAxis = document.getElementById('price-axis');
add(priceAxis, 'rect', { x: 0, y: 0, width: 1, height: '100%' });
for (let i = 0; i < 7; i++) {
  const y = Math.round(41 + i * 111.8);
  tick(priceAxis, y, 8);
  tick(priceAxis, y + 56, 3);
  add(priceAxis, 'text', { x: 3, y: y + 4 }, (40000 - i * 5000) + ',');
}
add(priceAxis, 'rect', { x: 2, y: 252, width: 58, height: 10, fill: '#fff' });
add(priceAxis, 'text', { x: 3, y: 261, class: 'last-price' }, '30348,22');

// Volume plot
const volume = document.getElementById('volume-plot');
const volLayer = add(volume, 'g', { transform: 'translate(-50 -846)' });
[
  [591, 937, 0], [599, 927, 1], [647, 955, 0], [760, 957, 0], [767, 922, 0], [791, 880, 1], [799, 861, 1],
  [807, 899, 0], [815, 940, 1], [822, 872, 1], [830, 949, 0], [838, 947, 1], [846, 911, 0], [854, 929, 1]
].forEach(([x, y, up]) => add(volLayer, 'rect', { x: x, y: y, width: 2, height: 958 - y, fill: up ? GREEN : RED }));

[[225, 'Oca23'], [472, 'Þub23'], [696, 'Mar23'], [943, 'Nis23']].forEach(([x, label]) => {
  add(volLayer, 'rect', { x: x, y: 940, width: 1, height: 18 });
  add(volLayer, 'text', { x: x + 2, y: 955 }, label);
});
add(volume, 'rect', { x: CROSS_X - 50, y: 0, width: 1, height: 91 });

const volumeAxis = document.getElementById('volume-axis');
add(volumeAxis, 'rect', { x: 0, y: 3, width: 1, height: 110 });
tick(volumeAxis, 14, 3);
tick(volumeAxis, 44, 8);
tick(volumeAxis, 74, 3);
tick(volumeAxis, 104, 8);
add(volumeAxis, 'text', { x: 4, y: 48 }, '15, Mr');
add(volumeAxis, 'text', { x: 4, y: 108 }, '10,');
```
